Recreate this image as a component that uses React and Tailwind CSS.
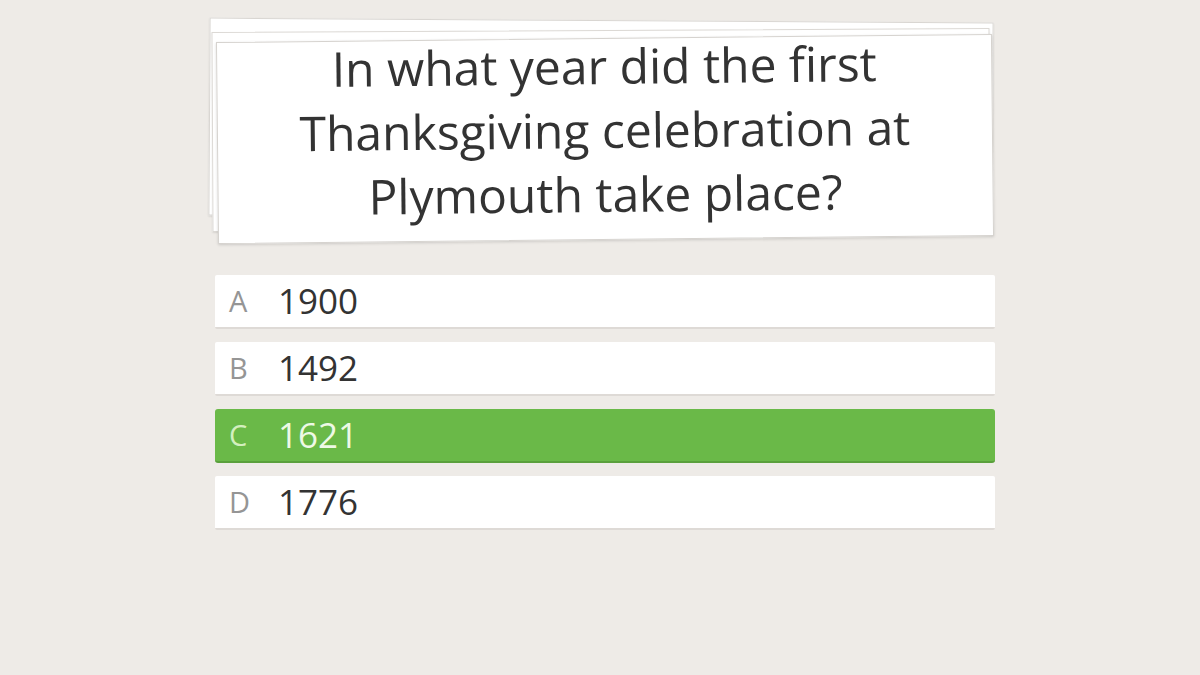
import React from 'react'

const answers = [
  { letter: 'A', value: '1900' },
  { letter: 'B', value: '1492' },
  { letter: 'C', value: '1621', correct: true },
  { letter: 'D', value: '1776' },
]

const App = () => {
  return (
    <div
      className="w-[1200px] h-[675px] bg-[#eeebe7] overflow-hidden"
      style={{ fontFamily: '"Open Sans", "Noto Sans", sans-serif' }}
    >
      <div className="w-[780px] ml-[215px] pt-[20px]">
        {/* stacked question cards */}
        <div className="relative h-[222px]">
          <div className="absolute left-[-6px] top-0 w-[784px] h-[198px] bg-white border border-[#d9d6d2] shadow-[0_1px_2px_rgba(0,0,0,0.12)] rotate-[0.35deg]" />
          <div className="absolute left-[-3px] top-[10px] w-[778px] h-[200px] bg-white border border-[#dcd9d5] shadow-[0_1px_2px_rgba(0,0,0,0.1)] -rotate-[0.3deg]" />
          <div className="absolute left-[2px] top-[18px] w-[776px] h-[202px] bg-white border border-[#d6d3cf] shadow-[0_1px_3px_rgba(0,0,0,0.15)] -rotate-[0.6deg] flex items-center justify-center">
            <p className="text-[48px] leading-[64px] text-[#333333] text-center -mt-[18px]">
              In what year did the first
              <br />
              Thanksgiving celebration at
              <br />
              Plymouth take place?
            </p>
          </div>
        </div>

        {/* answer options */}
        <div className="mt-[33px] flex flex-col gap-[13px]">
          {answers.map((answer) => (
            <div
              key={answer.letter}
              className={
                answer.correct
                  ? 'h-[54px] flex items-center rounded-[3px] bg-[#6ab948] border-b-2 border-[#5aa03c]'
                  : 'h-[54px] flex items-center rounded-[2px] bg-white border-b-2 border-[#dedad6]'
              }
            >
              <span
                className={
                  answer.correct
                    ? 'w-[63px] pl-[14px] text-[29px] text-[#d3efbf]'
                    : 'w-[63px] pl-[14px] text-[29px] text-[#959595]'
                }
              >
                {answer.letter}
              </span>
              <span
                className={
                  answer.correct
                    ? 'text-[35px] text-[#eef9e6]'
                    : 'text-[35px] text-[#333333]'
                }
              >
                {answer.value}
              </span>
            </div>
          ))}
        </div>
      </div>
    </div>
  )
}

export default App
